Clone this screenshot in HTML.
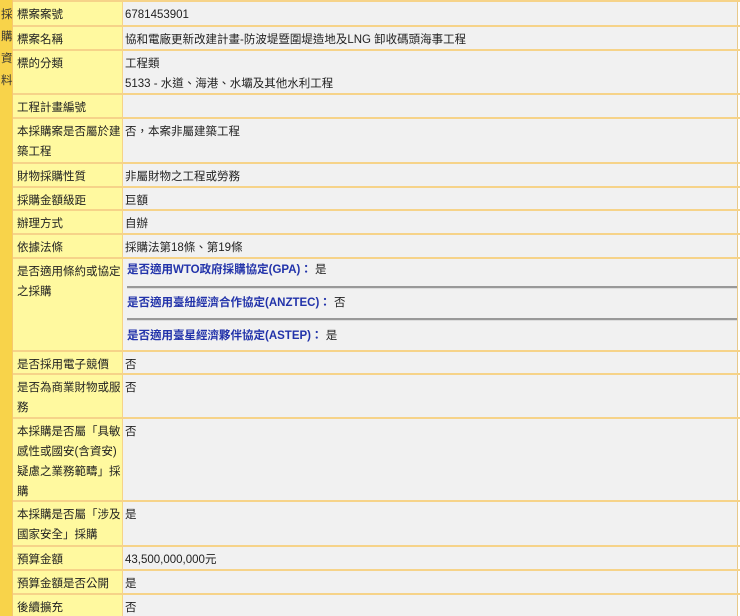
<!DOCTYPE html>
<html><head><meta charset="utf-8"><style>
*{margin:0;padding:0;box-sizing:border-box}
body{width:740px;height:616px;background:#fff;font-family:"Liberation Sans","Noto Sans CJK TC",sans-serif;font-size:11.5px;color:#222;position:relative;overflow:hidden}
.side{position:absolute;left:0;top:0;width:13px;height:616px;background:#f8d34a;border-right:1px solid #f6c96e}
.side span{display:block;position:absolute;left:1px;font-size:11.5px;color:#333;line-height:14px}
.r{position:absolute;left:13px;width:727px;border-top:2px solid #f6d389}
.l{position:absolute;left:0;top:0;bottom:0;width:110px;background:#fff99f;padding:3px 0 0 4px;border-right:1px solid #f6d389;overflow:hidden}
.v{position:absolute;left:110px;top:0;bottom:0;right:2px;background:#f1f1f1;padding:3px 0 0 2px;border-right:1px solid #e8c98a;overflow:hidden}
.ln{height:20px;line-height:20px;white-space:nowrap;overflow:visible}
.b{color:#2233aa;font-weight:bold}
.hr{position:absolute;left:4px;width:610px;height:3px;border-top:2px solid #999;border-bottom:1px solid #ddd}
.abs{position:absolute;left:4px}
</style></head><body>
<div class="side"><span style="top:8px">採</span><span style="top:30px">購</span><span style="top:52px">資</span><span style="top:74px">料</span></div>

<div class="r" style="top:0;height:25px"><div class="l"><div class="ln">標案案號</div></div><div class="v"><div class="ln">6781453901</div></div></div>
<div class="r" style="top:25px;height:24px"><div class="l"><div class="ln">標案名稱</div></div><div class="v"><div class="ln">協和電廠更新改建計畫-防波堤暨圍堤造地及LNG 卸收碼頭海事工程</div></div></div>
<div class="r" style="top:49px;height:44px"><div class="l"><div class="ln">標的分類</div></div><div class="v"><div class="ln">工程類</div><div class="ln">5133 - 水道、海港、水壩及其他水利工程</div></div></div>
<div class="r" style="top:93px;height:24px"><div class="l"><div class="ln">工程計畫編號</div></div><div class="v"></div></div>
<div class="r" style="top:117px;height:45px"><div class="l"><div class="ln">本採購案是否屬於建</div><div class="ln">築工程</div></div><div class="v"><div class="ln">否，本案非屬建築工程</div></div></div>
<div class="r" style="top:162px;height:24px"><div class="l"><div class="ln">財物採購性質</div></div><div class="v"><div class="ln">非屬財物之工程或勞務</div></div></div>
<div class="r" style="top:186px;height:23px"><div class="l"><div class="ln">採購金額級距</div></div><div class="v"><div class="ln">巨額</div></div></div>
<div class="r" style="top:209px;height:24px"><div class="l"><div class="ln">辦理方式</div></div><div class="v"><div class="ln">自辦</div></div></div>
<div class="r" style="top:233px;height:24px"><div class="l"><div class="ln">依據法條</div></div><div class="v"><div class="ln">採購法第18條、第19條</div></div></div>
<div class="r" style="top:257px;height:93px"><div class="l"><div class="ln">是否適用條約或協定</div><div class="ln">之採購</div></div><div class="v">
<div class="ln abs" style="top:1px"><span class="b">是否適用WTO政府採購協定(GPA)：</span> 是</div>
<div class="hr" style="top:27px"></div>
<div class="ln abs" style="top:34px"><span class="b">是否適用臺紐經濟合作協定(ANZTEC)：</span> 否</div>
<div class="hr" style="top:59px"></div>
<div class="ln abs" style="top:67px"><span class="b">是否適用臺星經濟夥伴協定(ASTEP)：</span> 是</div>
</div></div>
<div class="r" style="top:350px;height:23px"><div class="l"><div class="ln">是否採用電子競價</div></div><div class="v"><div class="ln">否</div></div></div>
<div class="r" style="top:373px;height:44px"><div class="l"><div class="ln">是否為商業財物或服</div><div class="ln">務</div></div><div class="v"><div class="ln">否</div></div></div>
<div class="r" style="top:417px;height:83px"><div class="l"><div class="ln">本採購是否屬「具敏</div><div class="ln">感性或國安(含資安)</div><div class="ln">疑慮之業務範疇」採</div><div class="ln">購</div></div><div class="v"><div class="ln">否</div></div></div>
<div class="r" style="top:500px;height:45px"><div class="l"><div class="ln">本採購是否屬「涉及</div><div class="ln">國家安全」採購</div></div><div class="v"><div class="ln">是</div></div></div>
<div class="r" style="top:545px;height:24px"><div class="l"><div class="ln">預算金額</div></div><div class="v"><div class="ln">43,500,000,000元</div></div></div>
<div class="r" style="top:569px;height:24px"><div class="l"><div class="ln">預算金額是否公開</div></div><div class="v"><div class="ln">是</div></div></div>
<div class="r" style="top:593px;height:23px"><div class="l"><div class="ln">後續擴充</div></div><div class="v"><div class="ln">否</div></div></div>
</body></html>
